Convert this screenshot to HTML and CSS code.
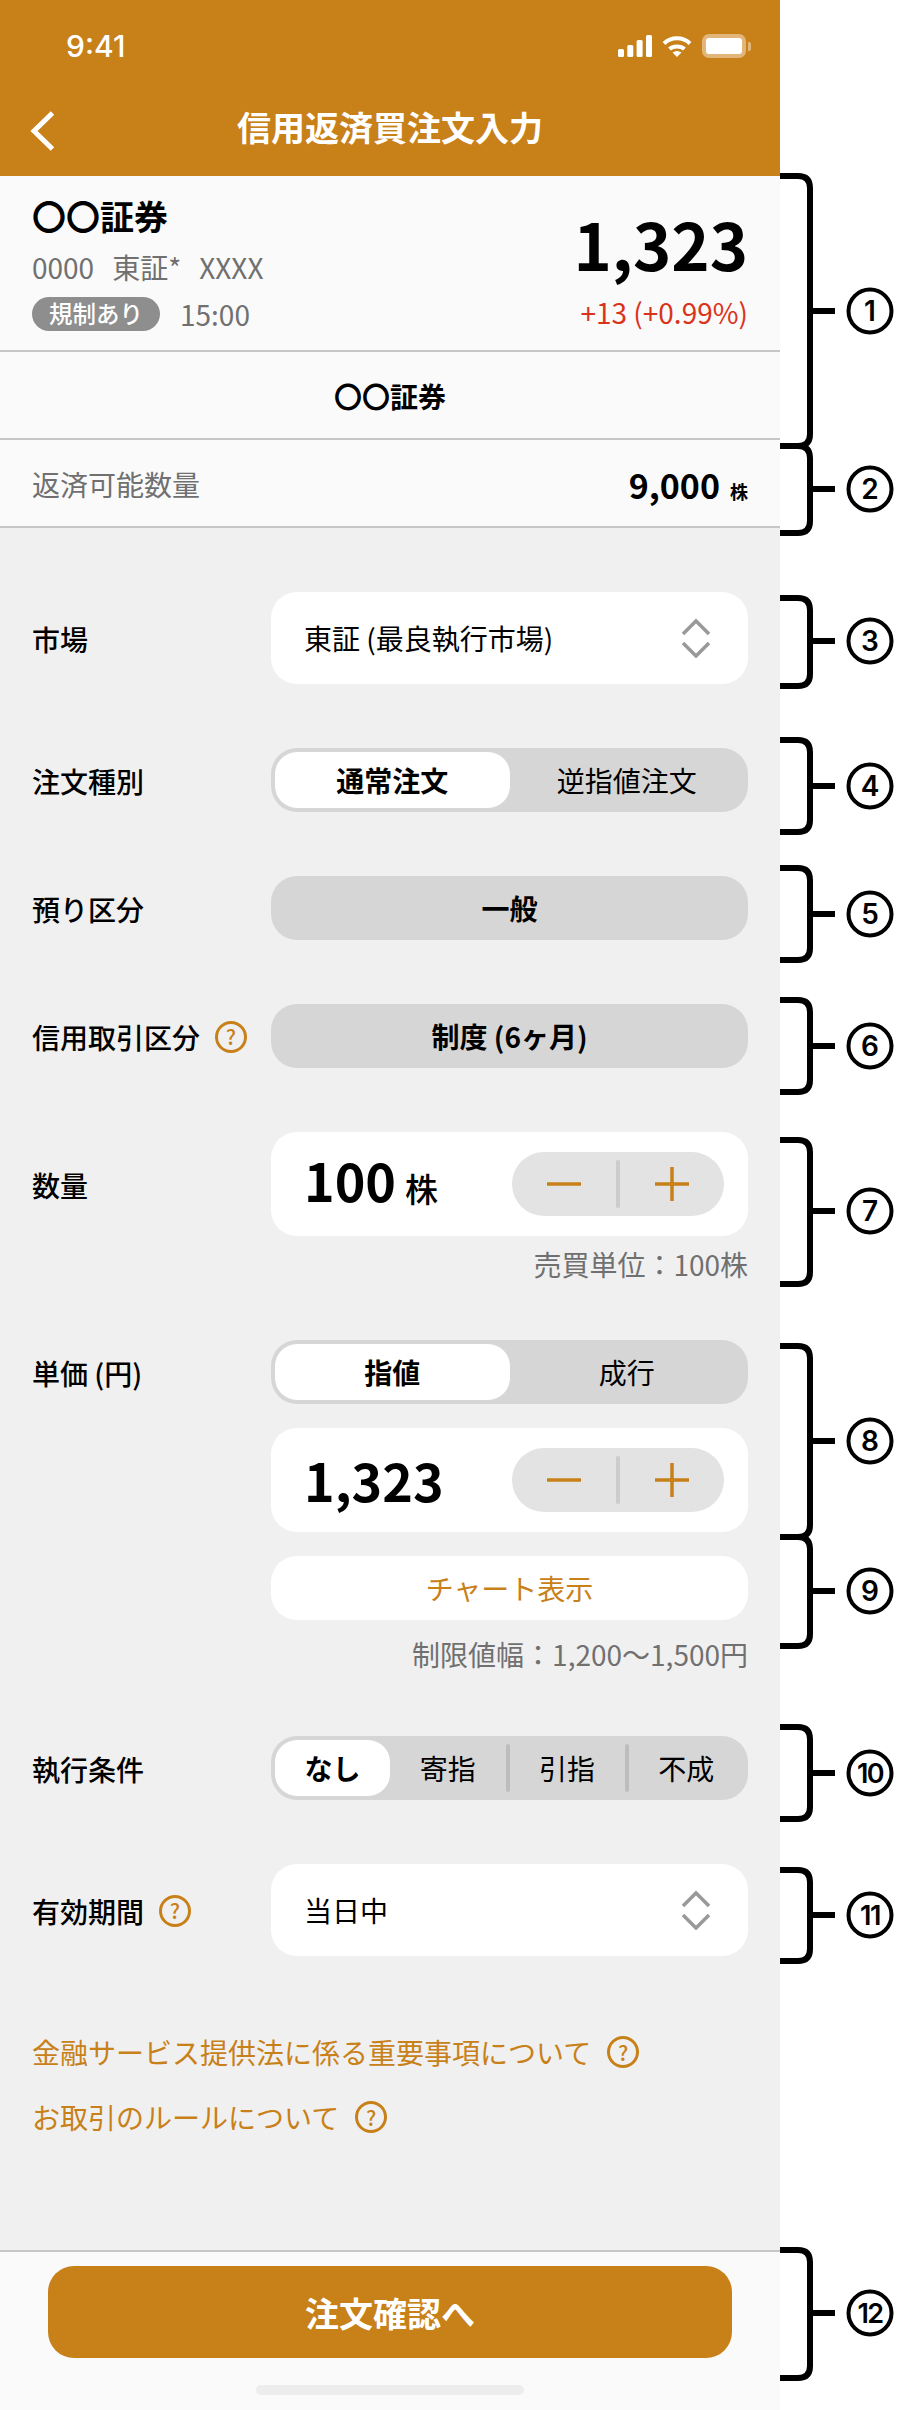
FILE: index.html
```html
<!DOCTYPE html>
<html lang="ja">
<head>
<meta charset="utf-8">
<title>信用返済買注文入力</title>
<link rel="stylesheet" href="styles.css">
</head>
<body>
<div class="page">
  <div class="phone">
    <header class="header">
      <div class="status">
        <span class="clock">9:41</span>
        <div class="status-icons">
          <svg class="signal" width="34" height="22" viewBox="0 0 34 22"><rect x="0" y="14" width="6" height="8" rx="1.5"/><rect x="9.3" y="10" width="6" height="12" rx="1.5"/><rect x="18.6" y="5" width="6" height="17" rx="1.5"/><rect x="28" y="0" width="6" height="22" rx="1.5"/></svg>
          <svg class="wifi" width="30" height="22" viewBox="0 0 30 22"><path class="wifi-arc" d="M2 8.5C9 1.5 21 1.5 28 8.5"/><path class="wifi-arc" d="M7.5 14C11.500 10.500 18.500 10.500 22.500 14"/><path class="wifi-tip" d="M15 22L10.500 17.500Q15 14.500 19.500 17.500Z"/></svg>
          <div class="battery"><div class="battery-fill"></div></div>
          <div class="battery-nub"></div>
        </div>
      </div>
      <div class="nav">
        <svg class="back" width="26" height="42" viewBox="0 0 26 42"><path d="M22.500 3L4 21L22.500 39"/></svg>
        <h1 class="title">信用返済買注文入力</h1>
      </div>
    </header>

    <section class="quote">
      <div class="quote-left">
        <div class="stock-name">〇〇証券</div>
        <div class="stock-meta"><span>0000</span><span>東証*</span><span>XXXX</span></div>
        <div class="stock-flags"><span class="badge">規制あり</span><span class="time">15:00</span></div>
      </div>
      <div class="quote-right">
        <div class="price">1,323</div>
        <div class="change">+13 (+0.99%)</div>
      </div>
    </section>
    <section class="brand-row">〇〇証券</section>
    <section class="avail-row">
      <span class="avail-label">返済可能数量</span>
      <span class="avail-value">9,000<small class="avail-unit">株</small></span>
    </section>

    <main class="form">
      <div class="row">
        <div class="label">市場</div>
        <div class="select"><span>東証 (最良執行市場)</span>
          <svg class="updown" width="30" height="40" viewBox="0 0 30 40"><path d="M2 16L15 3L28 16M2 25L15 38L28 25"/></svg>
        </div>
      </div>
      <div class="row">
        <div class="label">注文種別</div>
        <div class="seg">
          <div class="seg-item on">通常注文</div>
          <div class="seg-item">逆指値注文</div>
        </div>
      </div>
      <div class="row">
        <div class="label">預り区分</div>
        <div class="fixed">一般</div>
      </div>
      <div class="row">
        <div class="label">信用取引区分<span class="help">?</span></div>
        <div class="fixed">制度 (6ヶ月)</div>
      </div>
      <div class="row row-top">
        <div class="label label-tall">数量</div>
        <div class="stack">
          <div class="num-card">
            <div class="num-value">100<span class="num-unit">株</span></div>
            <div class="stepper">
              <button class="step"><svg width="34" height="34" viewBox="0 0 34 34"><path d="M0 17H34"/></svg></button>
              <i class="step-sep"></i>
              <button class="step"><svg width="34" height="34" viewBox="0 0 34 34"><path d="M0 17H34M17 0V34"/></svg></button>
            </div>
          </div>
          <div class="note note-unit">売買単位：100株</div>
        </div>
      </div>
      <div class="row row-top">
        <div class="label">単価 (円)</div>
        <div class="stack">
          <div class="seg">
            <div class="seg-item on">指値</div>
            <div class="seg-item">成行</div>
          </div>
          <div class="num-card gap-top">
            <div class="num-value">1,323</div>
            <div class="stepper">
              <button class="step"><svg width="34" height="34" viewBox="0 0 34 34"><path d="M0 17H34"/></svg></button>
              <i class="step-sep"></i>
              <button class="step"><svg width="34" height="34" viewBox="0 0 34 34"><path d="M0 17H34M17 0V34"/></svg></button>
            </div>
          </div>
          <div class="chart-btn gap-top">チャート表示</div>
          <div class="note note-limit">制限値幅：1,200〜1,500円</div>
        </div>
      </div>
      <div class="row">
        <div class="label">執行条件</div>
        <div class="seg seg-four">
          <div class="seg-item on">なし</div>
          <div class="seg-item">寄指</div>
          <i class="seg-sep"></i>
          <div class="seg-item">引指</div>
          <i class="seg-sep"></i>
          <div class="seg-item">不成</div>
        </div>
      </div>
      <div class="row">
        <div class="label">有効期間<span class="help">?</span></div>
        <div class="select"><span>当日中</span>
          <svg class="updown" width="30" height="40" viewBox="0 0 30 40"><path d="M2 16L15 3L28 16M2 25L15 38L28 25"/></svg>
        </div>
      </div>
      <div class="links">
        <a class="link">金融サービス提供法に係る重要事項について<span class="help">?</span></a>
        <a class="link">お取引のルールについて<span class="help">?</span></a>
      </div>
    </main>

    <footer class="footer">
      <button class="cta">注文確認へ</button>
      <div class="home"></div>
    </footer>
  </div>

  <svg class="notes" width="916" height="2410" viewBox="0 0 916 2410">
    <path class="brk" d="M780 176H798Q810 176 810 188V434Q810 446 798 446H780M810 311H835"/>
    <path class="brk" d="M780 446H798Q810 446 810 458V521Q810 533 798 533H780M810 489H835"/>
    <path class="brk" d="M780 598H798Q810 598 810 610V674Q810 686 798 686H780M810 641H835"/>
    <path class="brk" d="M780 740H798Q810 740 810 752V820Q810 832 798 832H780M810 786H835"/>
    <path class="brk" d="M780 868H798Q810 868 810 880V948Q810 960 798 960H780M810 914H835"/>
    <path class="brk" d="M780 1000H798Q810 1000 810 1012V1080Q810 1092 798 1092H780M810 1046H835"/>
    <path class="brk" d="M780 1140H798Q810 1140 810 1152V1272Q810 1284 798 1284H780M810 1211H835"/>
    <path class="brk" d="M780 1346H798Q810 1346 810 1358V1525Q810 1537 798 1537H780M810 1441H835"/>
    <path class="brk" d="M780 1537H798Q810 1537 810 1549V1634Q810 1646 798 1646H780M810 1591H835"/>
    <path class="brk" d="M780 1727H798Q810 1727 810 1739V1807Q810 1819 798 1819H780M810 1773H835"/>
    <path class="brk" d="M780 1870H798Q810 1870 810 1882V1949Q810 1961 798 1961H780M810 1915H835"/>
    <path class="brk" d="M780 2250H798Q810 2250 810 2262V2366Q810 2378 798 2378H780M810 2313H835"/>
    <circle class="dot" cx="870" cy="311" r="21.500"/><text class="num" x="870" y="321">1</text>
    <circle class="dot" cx="870" cy="489" r="21.500"/><text class="num" x="870" y="499">2</text>
    <circle class="dot" cx="870" cy="641" r="21.500"/><text class="num" x="870" y="651">3</text>
    <circle class="dot" cx="870" cy="786" r="21.500"/><text class="num" x="870" y="796">4</text>
    <circle class="dot" cx="870" cy="914" r="21.500"/><text class="num" x="870" y="924">5</text>
    <circle class="dot" cx="870" cy="1046" r="21.500"/><text class="num" x="870" y="1056">6</text>
    <circle class="dot" cx="870" cy="1211" r="21.500"/><text class="num" x="870" y="1221">7</text>
    <circle class="dot" cx="870" cy="1441" r="21.500"/><text class="num" x="870" y="1451">8</text>
    <circle class="dot" cx="870" cy="1591" r="21.500"/><text class="num" x="870" y="1601">9</text>
    <circle class="dot" cx="870" cy="1773" r="21.500"/><text class="num num-two" x="870" y="1783">10</text>
    <circle class="dot" cx="870" cy="1915" r="21.500"/><text class="num num-two" x="870" y="1925">11</text>
    <circle class="dot" cx="870" cy="2313" r="21.500"/><text class="num num-two" x="870" y="2323">12</text>
  </svg>
</div>
</body>
</html>
```
FILE: styles.css
```css
* { box-sizing: border-box; }
html, body { margin: 0; padding: 0; background: #fff; }
body {
  font-family: "Noto Sans CJK JP", "Noto Sans", sans-serif;
  color: #000;
}
.page { position: relative; width: 916px; height: 2410px; overflow: hidden; }
.phone { width: 780px; height: 2410px; display: flex; flex-direction: column; }

/* header */
.header { height: 176px; background: #c88019; color: #fff; flex: none; }
.status { height: 92px; display: flex; justify-content: space-between; padding: 0 29px 0 66px; }
.clock { font-family: Inter, sans-serif; font-weight: 500; font-size: 30px; line-height: 30px; margin-top: 31px; }
.status-icons { display: flex; align-items: flex-start; padding-top: 34px; }
.signal { fill: #fff; margin-top: 1px; }
.wifi { margin: 1px 0 0 10px; }
.wifi-arc { fill: none; stroke: #fff; stroke-width: 4; }
.wifi-tip { fill: #fff; }
.battery { width: 44px; height: 24px; margin-left: 10px; border: 4px solid #e2b67a; border-radius: 7px; background: #e2b67a; }
.battery-fill { width: 100%; height: 100%; background: #fff; border-radius: 3px; }
.battery-nub { width: 3px; height: 9px; margin: 8px 0 0 2px; background: #e2b67a; border-radius: 0 2px 2px 0; }
.nav { position: relative; height: 84px; display: flex; align-items: center; justify-content: center; }
.back { position: absolute; left: 30px; top: 18px; fill: none; stroke: #fff; stroke-width: 5; }
.title { margin: 0; font-size: 34px; line-height: 48px; font-weight: 700; margin-top: -14px; }

/* quote */
.quote { height: 176px; flex: none; background: #fafafa; border-bottom: 2px solid #c6c6c6; display: flex; justify-content: space-between; padding: 18px 32px 0 32px; }
.stock-name { font-size: 34px; line-height: 44px; font-weight: 700; }
.stock-meta { display: flex; gap: 18px; margin-top: 9px; font-size: 28px; line-height: 40px; color: #707070; }
.stock-flags { display: flex; align-items: center; margin-top: 9px; }
.badge { width: 128px; height: 34px; border-radius: 17px; background: #8e8e8e; color: #fff; font-size: 23.500px; line-height: 32px; text-align: center; font-weight: 500; }
.time { margin-left: 20px; font-size: 28px; line-height: 34px; color: #707070; margin-top: 1px; }
.quote-right { display: flex; flex-direction: column; align-items: flex-end; }
.price { font-size: 65px; line-height: 80px; font-weight: 700; margin-top: 9px; }
.change { margin-top: 9px; font-size: 28px; line-height: 40px; color: #d9341a; }
.brand-row { height: 88px; flex: none; background: #fafafa; border-bottom: 2px solid #c6c6c6; display: flex; align-items: center; justify-content: center; font-size: 28px; font-weight: 700; padding-top: 2px; }
.avail-row { height: 88px; flex: none; background: #fafafa; border-bottom: 2px solid #c6c6c6; display: flex; align-items: center; justify-content: space-between; padding: 2px 32px 0 32px; }
.avail-label { font-size: 28px; color: #707070; }
.avail-value { font-size: 34px; font-weight: 700; }
.avail-unit { font-size: 18px; margin-left: 10px; font-weight: 700; }

/* form */
.form { flex: 1; background: #f0f0f0; padding: 64px 32px 0 32px; display: flex; flex-direction: column; gap: 64px; }
.row { display: grid; grid-template-columns: 239px 477px; align-items: center; }
.row-top { align-items: start; }
.label { display: flex; align-items: center; font-size: 28px; line-height: 40px; font-weight: 500; min-height: 64px; padding-top: 1px; }
.label-tall { min-height: 104px; }
.help { flex: none; display: inline-flex; align-items: center; justify-content: center; width: 32px; height: 32px; margin-left: 15px; border: 3px solid #c88019; border-radius: 50%; color: #c88019; font-size: 21px; line-height: 1; font-weight: 500; }
.select { height: 92px; background: #fff; border-radius: 26px; display: flex; align-items: center; justify-content: space-between; padding: 0 37px 0 33px; font-size: 28px; }
.updown { fill: none; stroke: #999; stroke-width: 3.500; }
.seg { height: 64px; background: #d6d6d6; border-radius: 26px; padding: 4px; display: flex; align-items: stretch; font-size: 28px; }
.seg-item { flex: 1; display: flex; align-items: center; justify-content: center; border-radius: 22px; }
.seg-item.on { background: #fff; font-weight: 700; }
.seg-sep { flex: none; width: 4px; margin: 4px 0; background: #bdbdbd; border-radius: 2px; }
.fixed { height: 64px; background: #d6d6d6; border-radius: 26px; display: flex; align-items: center; justify-content: center; font-size: 28px; font-weight: 700; }
.stack { display: flex; flex-direction: column; }
.num-card { height: 104px; background: #fff; border-radius: 26px; display: flex; align-items: center; justify-content: space-between; padding: 0 24px 0 33px; }
.num-value { font-size: 52px; line-height: 64px; font-weight: 700; }
.num-unit { font-size: 33px; font-weight: 500; margin-left: 9px; }
.stepper { width: 212px; height: 64px; background: #e3e3e3; border-radius: 32px; display: flex; align-items: center; }
.step { flex: 1; height: 64px; padding: 0; border: 0; background: none; display: flex; align-items: center; justify-content: center; }
.step svg { fill: none; stroke: #c88019; stroke-width: 3.500; }
.step-sep { flex: none; width: 4px; height: 48px; background: #ccc; border-radius: 2px; }
.gap-top { margin-top: 24px; }
.chart-btn { height: 64px; background: #fff; border-radius: 26px; display: flex; align-items: center; justify-content: center; color: #c88019; font-size: 28px; }
.note { font-size: 28px; line-height: 28px; color: #707070; text-align: right; }
.note-unit { margin-top: 14px; margin-bottom: -2px; }
.note-limit { margin-top: 20px; margin-bottom: 4px; }
.links { display: flex; flex-direction: column; gap: 25px; margin-top: 12px; }
.link { display: flex; align-items: center; height: 40px; font-size: 28px; line-height: 40px; color: #c88019; }
.link .help { margin-left: 16px; }

/* footer */
.footer { height: 160px; flex: none; background: #fafafa; border-top: 2px solid #c6c6c6; padding-top: 14px; display: flex; flex-direction: column; align-items: center; }
.cta { width: 684px; height: 92px; border: 0; border-radius: 26px; background: #c88019; color: #fff; font-family: inherit; font-size: 34px; font-weight: 700; padding: 0; }
.home { width: 268px; height: 10px; margin-top: 27px; background: #ededed; border-radius: 5px; }

/* annotation overlay */
.notes { position: absolute; left: 0; top: 0; pointer-events: none; }
.brk { fill: none; stroke: #000; stroke-width: 6; stroke-linecap: butt; }
.dot { fill: #fff; stroke: #000; stroke-width: 4; }
.num { font-family: Inter, sans-serif; font-size: 28px; font-weight: 600; text-anchor: middle; }
.num-two { font-size: 27px; letter-spacing: -1.500px; }
```
